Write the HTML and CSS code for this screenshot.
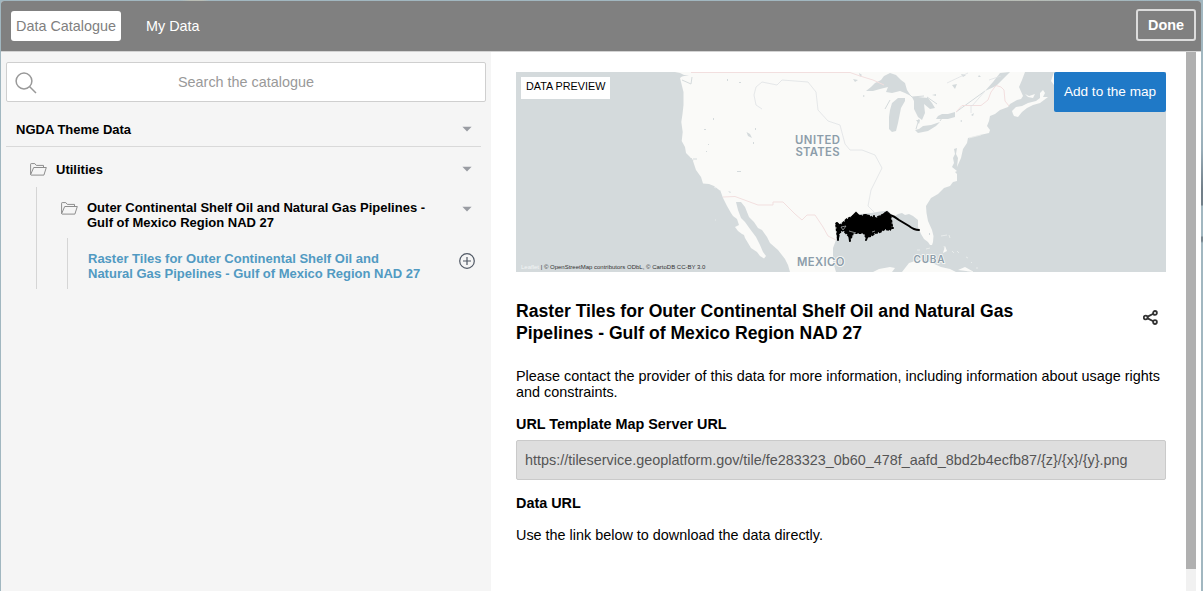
FILE: index.html
```html
<!DOCTYPE html>
<html lang="en">
<head>
<meta charset="utf-8">
<title>Data Catalogue</title>
<link rel="stylesheet" href="styles.css">
</head>
<body>
<div class="modal">
  <header class="header">
    <nav class="tabs">
      <button class="tab tab-active">Data Catalogue</button>
      <button class="tab">My Data</button>
    </nav>
    <button class="done">Done</button>
  </header>
  <main class="body">
    <aside class="sidebar">
      <div class="search">
        <svg class="search-icon" width="22" height="22" viewBox="0 0 22 22"><circle cx="9" cy="9" r="7.9"/><path d="M14.500 14.500 21 21"/></svg>
        <span>Search the catalogue</span>
      </div>
      <div class="group root"><span class="label">NGDA Theme Data</span><svg class="caret" width="10" height="6" viewBox="0 0 10 6"><path d="M.4.7h9.200L5 5.600z"/></svg></div>
      <div class="group utilities">
        <svg class="folder" width="17" height="13" viewBox="0 0 17 13"><path d="M.6 11.700V1.200Q.6.6 1.200.6h3.600l1.500 1.800h7.200v2.100M.6 11.700 3.700 4.500h12.600l-2.400 7.600H1.100z"/></svg>
        <span class="label">Utilities</span><svg class="caret" width="10" height="6" viewBox="0 0 10 6"><path d="M.4.7h9.200L5 5.600z"/></svg>
      </div>
      <div class="branch">
        <div class="group shelf">
          <svg class="folder" width="17" height="13" viewBox="0 0 17 13"><path d="M.6 11.700V1.200Q.6.6 1.200.6h3.600l1.500 1.800h7.200v2.100M.6 11.700 3.700 4.500h12.600l-2.400 7.600H1.100z"/></svg>
          <span class="label">Outer Continental Shelf Oil and Natural Gas Pipelines -<br>Gulf of Mexico Region NAD 27</span><svg class="caret" width="10" height="6" viewBox="0 0 10 6"><path d="M.4.7h9.200L5 5.600z"/></svg>
        </div>
        <div class="leaf">
          <span class="label">Raster Tiles for Outer Continental Shelf Oil and<br>Natural Gas Pipelines - Gulf of Mexico Region NAD 27</span>
          <svg class="plus" width="16" height="16" viewBox="0 0 16 16"><circle cx="8" cy="8" r="7.300"/><path d="M8 4v8M4 8h8"/></svg>
        </div>
      </div>
    </aside>
    <section class="content">
      <div class="preview">
        <svg class="map" width="650" height="200" viewBox="516 72 650 200">
          <path class="land" d="M675 72L680 73 684 75 689 75 682 76.500 680 78 682 86 683.500 92 683.500 105 682.500 114 681.300 122 682.700 132 681.700 141 685 147 686 153 690 157 693 161 696 170 701 177 703 183.500 709 184 714 186 720.500 191 723 198 727 206 731 213 733 216 737 219 739 225 735 227 738 231 742 234 744 235 745 238 748 243 751 248 757 252 760 256 764 258.500 766 256 763 252 760 245 756 237 750 229 745 222 741 218 738 210 736 202 741 202 745 207 749 217 754 222 758 228 762 230 767 237 770 243 778 250 785 259 788 265 790 272H836L833 262 833 248 836 240 837 233 838 225 845 221 852 216 860 214 871 213 880 211.500 888 210.500 891 214 895 216 898 214 902 213 905 215 909 214 913 216 918 220 918 227 921 234 924 239 928 242 930 245 932 245 933 242 933.500 236 932 230 928 221 926.500 213 926 206 931 198 938 194 944 188 950 186 953 182 957 181 957 174 955 172 957 171 952 167 954 163 953 158 955 154 954 149 957 148 956 154 958 158 957 167 961 158 963 149 967 143 968 138 980 135 989 133 990 130 987 126 989 121 990 116 995 114 1000 110 1008 107 1010 104 1017 100 1021 99 1023 96 1019 87 1022 80 1025 72Z"/>
          <path class="land" d="M1013 114L1012 111 1016 107 1022 106 1028 103 1036 101 1040 98 1040 93 1043 90 1045 93 1043 97 1048 97 1040 103 1033 105 1027 108 1022 112 1018 117 1014 116ZM1025 94L1029 96 1035 94 1033 98 1028 97ZM1054 72L1051 81 1054 85ZM902 272L909 263 918 260 930 262 941 267 950 269 956 272ZM873 272L879 269 890 267 895 268 892 272ZM943 253L945 246 947 251ZM958 270 965 267 974 272Z"/>
          <path class="water" d="M866 91L871 87 875 83 881 80 884 76 890 73 896 75 901 80 905 83 907 90 911 96 905 93 900 91 892 93 886 92 888 87 880 89 873 91ZM889 129L889 117 890 110 892 103 898 98 905 98 905 101 901 108 898 123 896 131 892 132ZM912 97L918 97 928 98 932 103 935 108 930 109 924 104 925 113 922 120 918 117 914 109 914 101ZM915 130L919 129 923 126 931 125 940 122 936 126 928 131 918 133ZM916 120h4l-1 4zM936 119L938 116 942 114 948 114 955 112 955 117 948 119ZM985 91L993 82 1000 73 1010 72 996 86Z"/>
          <path class="water" d="M746.500 132 750 134 752 138 748 136ZM853 79 858 80 855 82ZM859 73 862 75 860 77ZM952 85 957 84 955 89ZM961 74l5 1-3 2zM932 95l4-1v2zM979 75 981 77 978 77ZM863 95l2 1-2 1zM739 82h2v1h-2zM727 79h1v2h-1zM737 171h4v1h-4zM728 191l3 1-1 1zM704 129h2v1h-2zM713 118h1v2h-1zM755 128h1v2h-1zM753 142h1v2h-1zM708 144h1v1h-1zM706 151h1v1h-1zM971 115l3-2-1 3zM960 121l2-1v2zM929 233h1v2h-1z"/>
          <path class="water-line" d="M682 80 691 84 692 77M693 159h4M691 158l2 3M907 92l5 5 12-1M927 97l10 7M885 109l5-9M919 119l-3 10M940 121l2-3M956 112l29-21"/>
          <path class="islands" d="M714 187l2 1M720 190l1 1M715 220h1M941 236l6-1M949 235l1 3M944 246l1 4M952 251l2 2M957 251l2 2M966 257l2 1M971 262l1 1M976 268h2M917 250h3M926 249l4-1M969 138l12-3"/>
          <path class="border" d="M691 72.500H850L860 76 873 80 884 85M723 197 735 196.500 758 205H773V202H783L795 214 802 220 807 215H815L823 227 828 236 836 240M956 112 962 105.500H981L988 100 991 92 996 85.500 1001 87 1004 90 1005 101 1009 106"/>
          <path class="river" d="M762 109 756 105 754 95 756 87 762 82 777 85 782 80 808 82 816 92 818 110 828 121 840 125 845 144 850 150H862L875 155 882 168 871 190 868 206 874 212M971 105v8M985 91l-13 15M1001 76l-12 4M947 83l21-10"/>
          <path class="pipes" d="M836 223 839 226 843 223 847 219 852 217 855 215 860 216 865 215 870 216 874 219 878 217 883 215 887 212 890 215 891 219 892 226 890 230 885 229 880 232 875 233 871 236 866 237 864 233 853 233 851 238 848 235 843 230 839 233 838 239 837 232Z"/>
          <path class="pipe-lines" d="M837 223l4 4-3 8v5M848 227l2 14M852 217l4-4 4 4M866 240l2-5 7-4M865 217l1-2M874 219l0-3M881 216l6-4M892 228h1M890 215q4 1 9 5l10 6q5 4 10 4"/>
          <path class="gaps" d="M841 227l5-1-3 4zM849 231l7 2M872 232l3-1"/>
          <g class="place"><text x="795" y="144" textLength="45">UNITED</text><text x="795.500" y="155.500" textLength="44">STATES</text><text x="797" y="266" textLength="47.500">MEXICO</text><text class="cuba" x="913.500" y="262.500" textLength="31">CUBA</text></g>
        </svg>
        <span class="preview-label">DATA PREVIEW</span>
        <button class="add">Add to the map</button>
        <div class="credits"><span>Leaflet</span> | © OpenStreetMap contributors ODbL, © CartoDB CC-BY 3.0</div>
      </div>
      <div class="heading">
        <h1>Raster Tiles for Outer Continental Shelf Oil and Natural Gas<br>Pipelines - Gulf of Mexico Region NAD 27</h1>
        <svg class="share" width="16" height="16" viewBox="0 0 16 16"><path d="M4.700 6.600 10.300 3.800M4.700 8.400l5.600 2.800"/><circle cx="2.700" cy="7.500" r="1.900"/><circle cx="12" cy="2.900" r="1.900"/><circle cx="12" cy="12.100" r="1.900"/></svg>
      </div>
      <p>Please contact the provider of this data for more information, including information about usage rights<br>and constraints.</p>
      <h2>URL Template Map Server URL</h2>
      <div class="url">https://tileservice.geoplatform.gov/tile/fe283323_0b60_478f_aafd_8bd2b4ecfb87/{z}/{x}/{y}.png</div>
      <h2>Data URL</h2>
      <p>Use the link below to download the data directly.</p>
    </section>
    <div class="scrollbar"><div class="thumb"></div></div>
  </main>
</div>
</body>
</html>
```
FILE: styles.css
```css
* { box-sizing: border-box; }
html { background: linear-gradient(#a1b7c0 0 120px, #99aeb9 150px, #717f89 189px 205px, #a1b7c0 206px 236px, #76858e 237px 241px, #a1b7c0 243px); }
body { margin: 0; height: 591px; padding: 1px 2px 0 1px; overflow: hidden; background: linear-gradient(90deg, #a1b7c0 0 180px, #b9bdb5 190px 202px, #a1b7c0 210px 70%, #b9bdb5 85%, #9eb5bf 96% 99.800%, transparent 99.850%); font-family: "Liberation Sans", Arial, sans-serif; color: #000; }
button { margin: 0; border: 0; font: inherit; }
.modal { height: 590px; border-radius: 3px 3px 0 0; overflow: hidden; background: #fff; }
.header { height: 51px; display: flex; justify-content: space-between; align-items: flex-start; padding: 8px 5px 0 10px; background: #808080; border-bottom: 1px solid #d3d3d3; }
.tabs { display: flex; gap: 20px; padding-top: 2px; }
.tab { height: 30px; padding: 0 5px; border-radius: 3px; background: none; color: #fff; font-size: 14.4px; line-height: 30px; }
.tab-active { width: 110px; background: #fff; color: #808080; }
.done { width: 60px; height: 32px; padding: 0; border: 2px solid #dcdcdc; border-radius: 3px; background: none; color: #fff; font-size: 14.4px; font-weight: bold; }
.body { height: 539px; display: flex; }
.sidebar { width: 490px; padding: 10px 5px; background: #f5f5f5; font-size: 13px; line-height: 15px; font-weight: bold; }
.search { height: 40px; display: flex; align-items: center; padding-left: 8px; border: 1px solid #cfcfcf; border-radius: 2px; background: #fff; color: #999; font-size: 14.4px; font-weight: normal; }
.search span { flex: 1; text-align: center; padding-right: 30px; }
.search-icon { margin-top: 2px; fill: none; stroke: #999; stroke-width: 1.5; }
.group { display: flex; align-items: flex-start; }
.label { flex: 1; }
.caret { margin: 4px 0 0; fill: #9a9da3; }
.root { width: 475px; height: 45px; padding: 20px 9px 0 10px; border-bottom: 1px solid #d9d9d9; }
.utilities { padding: 15px 14px 0 24px; height: 40px; }
.folder { width: 17px; height: 13px; flex: none; fill: none; stroke: #8d8d8d; stroke-width: 1; }
.utilities .folder { margin: 1px 9px 0 0; }
.branch { margin-left: 30px; height: 102px; border-left: 1px solid #d5d5d5; }
.shelf { height: 51px; padding: 13px 14px 0 24px; }
.shelf .folder { margin: 2px 9px 0 0; }
.shelf .caret { margin-top: 6px; }
.leaf { display: flex; height: 51px; margin-left: 30px; padding: 13px 11px 0 20px; border-left: 1px solid #d5d5d5; color: #519ac2; }
.plus { margin-top: 2px; fill: none; stroke: #515965; stroke-width: 1.2; }
.content { width: 695px; padding: 20px 20px 0 25px; font-size: 14.4px; line-height: 16px; }
.preview { position: relative; height: 200px; overflow: hidden; background: #d4dadc; }
.map { display: block; }
.land { fill: #fafaf8; }
.water { fill: #d4dadc; }
.water-line { fill: none; stroke: #d4dadc; stroke-width: 1; }
.islands { fill: none; stroke: #edf0ef; stroke-width: .8; }
.border { fill: none; stroke: #f2dfdf; stroke-width: 1; }
.river { fill: none; stroke: #dfe2e4; stroke-width: .8; }
.pipes { fill: #000; stroke: #000; stroke-width: 2; stroke-linejoin: bevel; stroke-dasharray: 3 1; }
.pipe-lines { fill: none; stroke: #000; stroke-width: 2; stroke-linecap: round; }
.gaps { fill: none; stroke: #b9bdbe; stroke-width: .7; }
.place { fill: #8c9daa; font: 600 11.3px Inter, sans-serif; paint-order: stroke; stroke: #fafaf8; stroke-width: 1.5px; }
.cuba { font-size: 10px; }
.preview-label { position: absolute; left: 5px; top: 5px; width: 89px; height: 22px; padding-left: 5px; background: #fff; font-size: 10.8px; line-height: 19px; white-space: nowrap; }
.add { position: absolute; right: 0; top: 0; width: 112px; height: 40px; padding: 0; border-radius: 2px; background: #1f79c7; color: #fff; font-size: 13.6px; }
.credits { position: absolute; left: 5px; bottom: 0; color: #333; font-size: 6px; line-height: 10px; white-space: nowrap; }
.credits span { color: #f3f5f5; }
.heading { display: flex; justify-content: space-between; margin-top: 28px; }
h1 { margin: 0; font-size: 17.6px; line-height: 22px; }
.share { margin: 10px 7px 0 0; fill: none; stroke: #333; stroke-width: 1.8; }
p { margin: 24px 0 16px; white-space: nowrap; }
h2 { margin: 0 0 8px; font-size: 14.4px; line-height: 16px; }
.url { height: 40px; margin-bottom: 15px; padding-left: 8px; border: 1px solid #cacaca; border-radius: 2px; background: #dedede; color: #555; line-height: 38px; white-space: nowrap; }
h2 + p { margin-top: 16px; }
.scrollbar { width: 10px; background: #f1f1f1; }
.thumb { height: 517px; background: #b0b0b0; }
```
